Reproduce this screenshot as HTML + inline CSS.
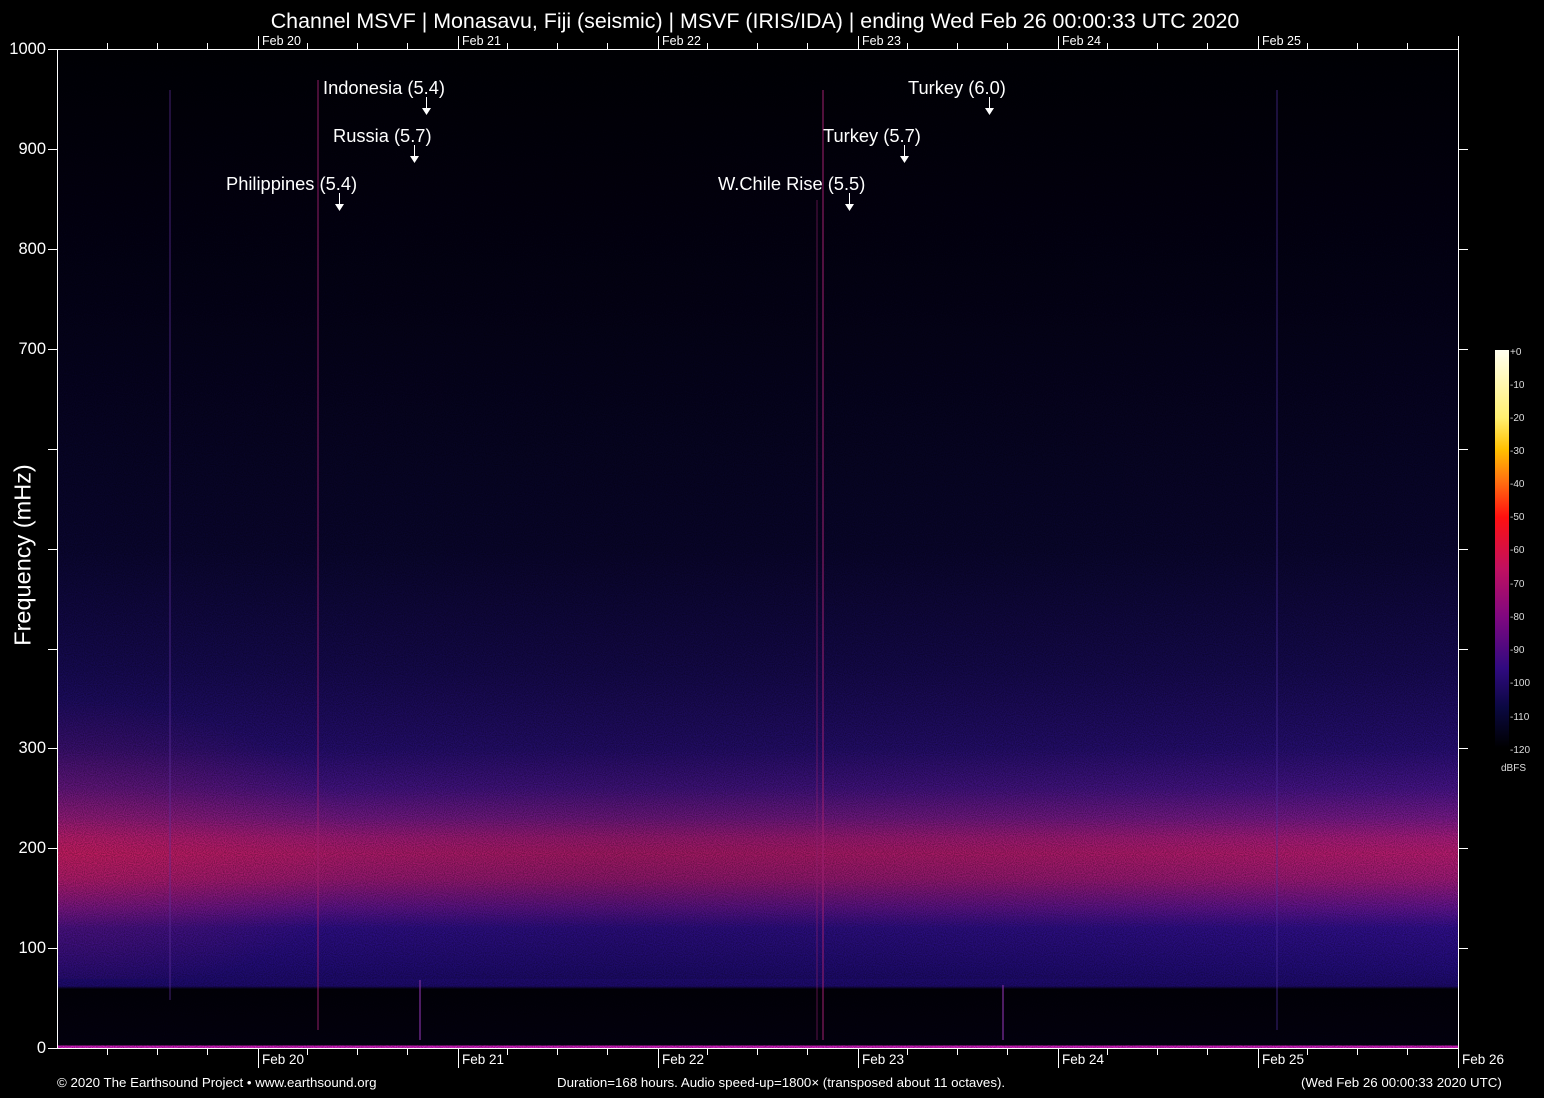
<!DOCTYPE html>
<html><head><meta charset="utf-8"><style>
body{margin:0;width:1544px;height:1098px;background:#000;overflow:hidden;position:relative;font-family:"Liberation Sans",sans-serif;color:#fff}
.t{position:absolute;white-space:nowrap}
#plot{position:absolute;left:58px;top:49px;width:1400px;height:999px;
background:
linear-gradient(to bottom,rgba(0,0,0,0) 0,rgba(0,0,0,0) 93.8%,#020108 94.1%,#030110 99.7%,#d020c0 99.8%),
linear-gradient(to bottom,#010005 0%,#040218 25%,#0a0630 50%,#160a52 62%,#260e72 70%,#461488 74%,#781a8a 77%,#a81c7c 79%,#b81c70 80.5%,#a01a78 83%,#601490 86%,#300f8c 88%,#220c7a 92%,#1c0a6a 94%,#050214 100%);}
#shade{position:absolute;left:58px;top:49px;width:1400px;height:930px;background:radial-gradient(ellipse 300px 150px at 0% 86%,rgba(220,30,60,0.3),rgba(0,0,0,0)),linear-gradient(to right,rgba(0,0,0,0) 0%,rgba(0,0,0,0.12) 40%,rgba(0,0,0,0.08) 70%,rgba(0,0,0,0) 100%)}
.ann{position:absolute;font-size:18.3px}
</style></head><body>
<div id="plot"></div><div id="shade"></div>
<svg width="1544" height="1098" style="position:absolute;left:0;top:0">
<defs><filter id="n"><feTurbulence type="fractalNoise" baseFrequency="0.9" numOctaves="1" seed="3"/><feColorMatrix values="0 0 0 0 0  0 0 0 0 0  0 0 0 0 0  0 0 0 -1.6 1.1"/></filter></defs>
<rect x="58" y="49" width="1400" height="940" filter="url(#n)" opacity="0.45"/>
<g stroke-width="2">
<line x1="318" y1="80" x2="318" y2="1030" stroke="#a02070" opacity="0.45"/>
<line x1="170" y1="90" x2="170" y2="1000" stroke="#6030a0" opacity="0.35"/>
<line x1="823" y1="90" x2="823" y2="1040" stroke="#a02070" opacity="0.5"/>
<line x1="817" y1="200" x2="817" y2="1040" stroke="#902070" opacity="0.3"/>
<line x1="1277" y1="90" x2="1277" y2="1030" stroke="#5030a0" opacity="0.35"/>
<line x1="420" y1="980" x2="420" y2="1040" stroke="#8030a0" opacity="0.6"/>
<line x1="1003" y1="985" x2="1003" y2="1040" stroke="#8030a0" opacity="0.6"/>
</g>
<g stroke="#fff" stroke-width="1" fill="none">
<line x1="57.5" y1="49" x2="57.5" y2="1049"/>
<line x1="57" y1="1048.5" x2="1459" y2="1048.5"/>
<line x1="1458.5" y1="49" x2="1458.5" y2="1049"/>
<line x1="57" y1="49.5" x2="1459" y2="49.5"/>
<path d="M48 49.5h10M48 149.5h10M48 249.5h10M48 349.5h10M48 449.5h10M48 549.5h10M48 649.5h10M48 748.5h10M48 848.5h10M48 948.5h10M48 1048.5h10"/>
<path d="M1458 149.5h10M1458 249.5h10M1458 349.5h10M1458 449.5h10M1458 549.5h10M1458 649.5h10M1458 748.5h10M1458 848.5h10M1458 948.5h10"/>
<path d="M107.5 1048v7M157.5 1048v7M207.5 1048v7M307.5 1048v7M357.5 1048v7M407.5 1048v7M507.5 1048v7M557.5 1048v7M607.5 1048v7M707.5 1048v7M757.5 1048v7M807.5 1048v7M907.5 1048v7M957.5 1048v7M1007.5 1048v7M1107.5 1048v7M1157.5 1048v7M1207.5 1048v7M1307.5 1048v7M1357.5 1048v7M1407.5 1048v7"/>
<path d="M258.5 1048v20M458.5 1048v20M658.5 1048v20M858.5 1048v20M1058.5 1048v20M1258.5 1048v20M1458.5 1048v20"/>
<path d="M258.5 36v14M458.5 36v14M658.5 36v14M858.5 36v14M1058.5 36v14M1258.5 36v14M1458.5 36v14M107.5 43v6M157.5 43v6M207.5 43v6M307.5 43v6M357.5 43v6M407.5 43v6M507.5 43v6M557.5 43v6M607.5 43v6M707.5 43v6M757.5 43v6M807.5 43v6M907.5 43v6M957.5 43v6M1007.5 43v6M1107.5 43v6M1157.5 43v6M1207.5 43v6M1307.5 43v6M1357.5 43v6M1407.5 43v6"/>
<path d="M426.5 97v12M414.5 145v12M339.5 193v12M989.5 97v12M904.5 145v12M849.5 193v12"/>
</g>
<g fill="#fff"><path d="M422 108h9l-4.5 7z M410 156h9l-4.5 7z M335 204h9l-4.5 7z M985 108h9l-4.5 7z M900 156h9l-4.5 7z M845 204h9l-4.5 7z"/></g>
<defs><linearGradient id="cb" x1="0" y1="0" x2="0" y2="1"><stop offset="0" stop-color="#fffff0"/><stop offset="0.17" stop-color="#fff070"/><stop offset="0.25" stop-color="#ffc000"/><stop offset="0.33" stop-color="#ff7010"/><stop offset="0.42" stop-color="#ff1010"/><stop offset="0.55" stop-color="#c01060"/><stop offset="0.67" stop-color="#800880"/><stop offset="0.8" stop-color="#300a80"/><stop offset="0.9" stop-color="#0a0840"/><stop offset="1" stop-color="#000"/></linearGradient></defs>
<rect x="1495" y="350" width="14" height="398" fill="url(#cb)"/>
<g font-family="Liberation Sans,sans-serif" font-size="10" fill="#ddd">
<text x="1510" y="355">+0</text><text x="1510" y="388">-10</text><text x="1510" y="421">-20</text><text x="1510" y="454">-30</text><text x="1510" y="487">-40</text><text x="1510" y="520">-50</text><text x="1510" y="553">-60</text><text x="1510" y="587">-70</text><text x="1510" y="620">-80</text><text x="1510" y="653">-90</text><text x="1510" y="686">-100</text><text x="1510" y="720">-110</text><text x="1510" y="753">-120</text><text x="1501" y="771">dBFS</text>
</g>
</svg>
<div class="t" style="left:0;width:1510px;top:9px;text-align:center;font-size:21.4px">Channel MSVF | Monasavu, Fiji (seismic) | MSVF (IRIS/IDA) | ending Wed Feb 26 00:00:33 UTC 2020</div>
<div class="t" style="left:6px;top:34px;font-size:16.5px;width:40px;text-align:right;line-height:30px">1000</div>
<div style="position:absolute;left:0;width:46px;top:0;font-size:16.5px;text-align:right">
<div class="t" style="right:0;top:140px">900</div><div class="t" style="right:0;top:240px">800</div><div class="t" style="right:0;top:340px">700</div><div class="t" style="right:0;top:739px">300</div><div class="t" style="right:0;top:839px">200</div><div class="t" style="right:0;top:939px">100</div><div class="t" style="right:0;top:1039px">0</div></div>
<div class="t" style="left:23px;top:555px;font-size:23.5px;transform:translate(-50%,-50%) rotate(-90deg)">Frequency (mHz)</div>
<div style="font-size:12.5px">
<div class="t" style="left:262px;top:34px">Feb 20</div><div class="t" style="left:462px;top:34px">Feb 21</div><div class="t" style="left:662px;top:34px">Feb 22</div><div class="t" style="left:862px;top:34px">Feb 23</div><div class="t" style="left:1062px;top:34px">Feb 24</div><div class="t" style="left:1262px;top:34px">Feb 25</div>
</div>
<div style="font-size:13.5px">
<div class="t" style="left:262px;top:1052px">Feb 20</div><div class="t" style="left:462px;top:1052px">Feb 21</div><div class="t" style="left:662px;top:1052px">Feb 22</div><div class="t" style="left:862px;top:1052px">Feb 23</div><div class="t" style="left:1062px;top:1052px">Feb 24</div><div class="t" style="left:1262px;top:1052px">Feb 25</div><div class="t" style="left:1462px;top:1052px">Feb 26</div>
</div>
<div class="t" style="left:57px;top:1075px;font-size:13.3px">© 2020 The Earthsound Project • www.earthsound.org</div>
<div class="t" style="left:557px;top:1075px;font-size:13.3px">Duration=168 hours. Audio speed-up=1800× (transposed about 11 octaves).</div>
<div class="t" style="left:1301px;top:1075px;font-size:13.3px">(Wed Feb 26 00:00:33 2020 UTC)</div>
<div class="t ann" style="left:323px;top:77px">Indonesia (5.4)</div>
<div class="t ann" style="left:333px;top:125px">Russia (5.7)</div>
<div class="t ann" style="left:226px;top:173px">Philippines (5.4)</div>
<div class="t ann" style="left:908px;top:77px">Turkey (6.0)</div>
<div class="t ann" style="left:823px;top:125px">Turkey (5.7)</div>
<div class="t ann" style="left:718px;top:173px">W.Chile Rise (5.5)</div>
</body></html>
